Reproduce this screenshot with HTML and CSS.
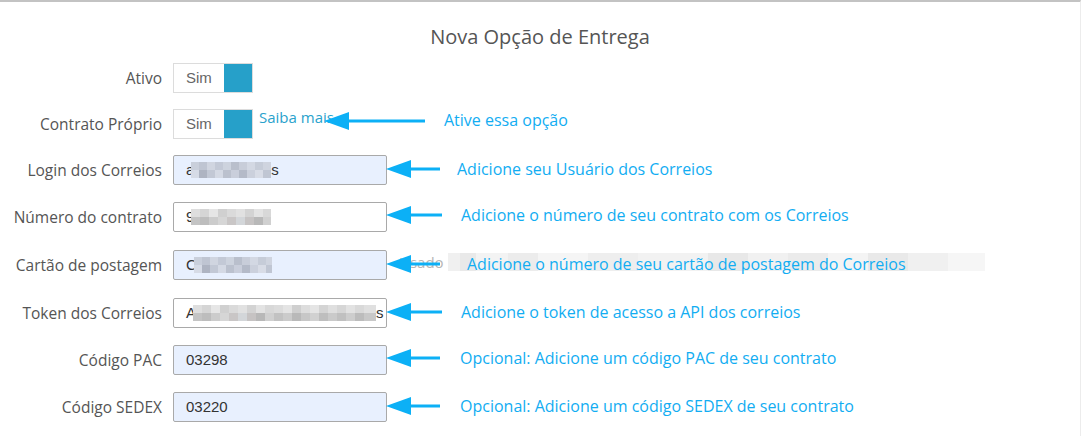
FILE: index.html
```html
<!DOCTYPE html>
<html lang="pt-BR">
<head>
<meta charset="utf-8">
<title>Nova Opção de Entrega</title>
<link rel="stylesheet" href="styles.css">
</head>
<body>
<div class="panel">
  <h2 class="title">Nova Opção de Entrega</h2>
  <form class="form">
    <div class="row">
      <label class="label">Ativo</label>
      <span class="toggle"><span class="toggle-text">Sim</span><span class="toggle-knob"></span></span>
    </div>

    <div class="row">
      <label class="label">Contrato Próprio</label>
      <span class="toggle"><span class="toggle-text">Sim</span><span class="toggle-knob"></span></span>
      <a class="more-link">Saiba mais</a>
      <div class="note note-first">
        <svg class="arrow-long" width="101" height="20" viewBox="0 0 101 20"><polygon points="0,10 25,1 25,19" fill="#0cb0f6"/><rect x="20" y="8.5" width="81" height="3" fill="#0cb0f6"/></svg>
        <span class="note-text">Ative essa opção</span>
      </div>
    </div>

    <div class="row">
      <label class="label">Login dos Correios</label>
      <div class="input input-fill"><span class="ch">a</span><span class="blur blur-blue blur-login"></span><span class="ch">s</span></div>
      <div class="note">
        <svg class="arrow" width="54" height="20" viewBox="0 0 54 20"><polygon points="0,10 25,1 25,19" fill="#0cb0f6"/><rect x="20" y="8.5" width="34" height="3" fill="#0cb0f6"/></svg>
        <span class="note-text">Adicione seu Usuário dos Correios</span>
      </div>
    </div>

    <div class="row row-gap1">
      <label class="label">Número do contrato</label>
      <div class="input"><span class="ch">9</span><span class="blur blur-gray blur-num"></span></div>
      <div class="note note-up">
        <svg class="arrow" width="56" height="20" viewBox="0 0 56 20"><polygon points="0,10 25,1 25,19" fill="#0cb0f6"/><rect x="20" y="8.5" width="36" height="3" fill="#0cb0f6"/></svg>
        <span class="note-text note-shift">Adicione o número de seu contrato com os Correios</span>
      </div>
    </div>

    <div class="row row-gap2">
      <label class="label">Cartão de postagem</label>
      <div class="input input-fill"><span class="ch">C</span><span class="blur blur-blue blur-card"></span></div>
      <span class="help">Usado</span><span class="help-blur"></span>
      <div class="note">
        <svg class="arrow" width="54" height="20" viewBox="0 0 54 20"><polygon points="0,10 25,1 25,19" fill="#0cb0f6"/><rect x="20" y="8.5" width="34" height="3" fill="#0cb0f6"/></svg>
        <span class="note-text note-shift-more">Adicione o número de seu cartão de postagem do Correios</span>
      </div>
    </div>

    <div class="row row-gap2">
      <label class="label">Token dos Correios</label>
      <div class="input"><span class="ch">A</span><span class="blur blur-gray blur-token"></span><span class="ch">s</span></div>
      <div class="note">
        <svg class="arrow" width="56" height="20" viewBox="0 0 56 20"><polygon points="0,10 25,1 25,19" fill="#0cb0f6"/><rect x="20" y="8.5" width="36" height="3" fill="#0cb0f6"/></svg>
        <span class="note-text note-shift">Adicione o token de acesso a API dos correios</span>
      </div>
    </div>

    <div class="row row-gap1">
      <label class="label">Código PAC</label>
      <div class="input input-fill"><span class="ch">03298</span></div>
      <div class="note note-up">
        <svg class="arrow" width="54" height="20" viewBox="0 0 54 20"><polygon points="0,10 25,1 25,19" fill="#0cb0f6"/><rect x="20" y="8.5" width="34" height="3" fill="#0cb0f6"/></svg>
        <span class="note-text note-shift-less">Opcional: Adicione um código PAC de seu contrato</span>
      </div>
    </div>

    <div class="row row-gap1">
      <label class="label">Código SEDEX</label>
      <div class="input input-fill"><span class="ch">03220</span></div>
      <div class="note">
        <svg class="arrow" width="54" height="20" viewBox="0 0 54 20"><polygon points="0,10 25,1 25,19" fill="#0cb0f6"/><rect x="20" y="8.5" width="34" height="3" fill="#0cb0f6"/></svg>
        <span class="note-text note-shift-less">Opcional: Adicione um código SEDEX de seu contrato</span>
      </div>
    </div>
  </form>
</div>
</body>
</html>
```

FILE: styles.css
```css
* { box-sizing: border-box; }

html, body {
  margin: 0;
  background: #ffffff;
}

body {
  font-family: "Open Sans", "Liberation Sans", sans-serif;
  color: #555555;
}

.panel {
  width: 1081px;
  height: 436px;
  border-top: 2px solid #c3c3c3;
  border-right: 1px solid #ececec;
  padding-top: 23px;
}

.title {
  margin: 0 0 14px;
  text-align: center;
  font-size: 20px;
  font-weight: 400;
  line-height: 24px;
  color: #555555;
}

.form {
  display: flex;
  flex-direction: column;
  gap: 16px;
}

.row {
  position: relative;
  display: flex;
  align-items: center;
  height: 30px;
}

.row-gap1 { margin-top: 1px; }
.row-gap2 { margin-top: 2px; }

.label {
  width: 162px;
  margin-right: 11px;
  text-align: right;
  font-size: 15.5px;
  color: #555555;
  white-space: nowrap;
}

.toggle {
  display: flex;
  width: 80px;
  height: 30px;
  border: 1px solid #dcdcdc;
  background: #ffffff;
}

.toggle-text {
  width: 50px;
  font-family: "Liberation Sans", Arial, sans-serif;
  font-size: 15px;
  line-height: 28px;
  color: #666666;
  padding-left: 12px;
}

.toggle-knob {
  flex: 1;
  background: #26a0c9;
}

.more-link {
  align-self: flex-start;
  margin-left: 6px;
  margin-top: -2px;
  font-size: 15px;
  line-height: 20px;
  color: #2aa2cc;
}

.input {
  display: flex;
  align-items: center;
  width: 214px;
  height: 30px;
  border: 1px solid #a9a9a9;
  border-radius: 2px;
  background: #ffffff;
  padding-left: 12px;
  font-family: "Liberation Sans", Arial, sans-serif;
  font-size: 15px;
  color: #333333;
}

.input-fill {
  background: #e8f0fe;
}

.ch { line-height: 16px; }

.blur {
  display: inline-block;
  height: 16px;
  margin-left: -3px;
  background-repeat: no-repeat;
  background-size: 100% 50%;
  background-position: 0 0, 0 100%;
}

.blur-blue {
  background-image:
    linear-gradient(90deg, #c9cfdb 0 8px, #bfc5d2 8px 16px, #d0d5e0 16px 24px, #c3c9d6 24px 32px, #cdd3de 32px 40px, #b9bfcc 40px 48px, #c8cdd9 48px 56px, #d3d8e3 56px 64px, #c6ccd8 64px 72px, #cfd4df 72px 80px),
    linear-gradient(90deg, #d6dbe6 0 8px, #aeb4c2 8px 16px, #c2c8d5 16px 24px, #d4d9e4 24px 32px, #bbc1ce 32px 40px, #c9cedb 40px 48px, #b4bac8 48px 56px, #cbd0dc 56px 64px, #d8dce6 64px 72px, #c0c6d3 72px 80px);
}

.blur-gray {
  background-image:
    linear-gradient(90deg, #dedede 0 9px, #d5d5d5 9px 18px, #e6e6e6 18px 27px, #d0d0d0 27px 36px, #dadada 36px 45px, #e1e1e1 45px 54px, #d3d3d3 54px 63px, #e3e3e3 63px 72px, #d8d8d8 72px 81px, #dcdcdc 81px 90px, #e4e4e4 90px 99px, #cfcfcf 99px 108px, #dddddd 108px 117px, #e5e5e5 117px 126px, #d4d4d4 126px 135px, #dfdfdf 135px 144px, #d6d6d6 144px 153px, #e2e2e2 153px 162px, #d9d9d9 162px 171px, #e0e0e0 171px 183px),
    linear-gradient(90deg, #c4c4c4 0 9px, #bdbdbd 9px 18px, #cccccc 18px 27px, #d6d6d6 27px 36px, #c9c6c6 36px 45px, #d3d6d9 45px 54px, #c6c3c3 54px 63px, #b8b8b8 63px 72px, #d0d0d0 72px 81px, #c2c2c2 81px 90px, #cbcbcb 90px 99px, #b9b9b9 99px 108px, #c7c7c7 108px 117px, #d1d1d1 117px 126px, #bebebe 126px 135px, #cacaca 135px 144px, #c0c0c0 144px 153px, #cdcdcd 153px 162px, #bcbcbc 162px 171px, #c8c8c8 171px 183px);
}

.blur-login { width: 80px; }
.blur-num { width: 80px; }
.blur-card { width: 78px; }
.blur-token { width: 183px; }

.help {
  margin-left: 12px;
  font-size: 15px;
  color: #b5b5b5;
  margin-top: -6px;
}

.help-blur {
  width: 537px;
  height: 18px;
  margin-left: 4px;
  margin-top: -6px;
  background: linear-gradient(90deg, #f0f0f0 0 12px, #e9e9e9 12px 28px, #f3f3f3 28px 60px, #ececec 60px 90px, #f5f5f5 90px 140px, #eeeeee 140px 190px, #f2f2f2 190px 260px, #e8e8e8 260px 300px, #f1f1f1 300px 340px, #ebebeb 340px 380px, #f4f4f4 380px 420px, #e9e9e9 420px 460px, #f0f0f0 460px 500px, #f6f6f6 500px 537px);
}

.note {
  position: absolute;
  left: 386px;
  top: -1px;
  height: 100%;
  display: flex;
  align-items: center;
  color: #12adf2;
}

.note-first {
  left: 324px;
  top: -3px;
}

.note-up { top: -2px; }

.arrow, .arrow-long {
  flex: none;
  display: block;
}

.note-text {
  margin-left: 17px;
  font-family: "Open Sans", sans-serif;
  font-size: 16px;
  white-space: nowrap;
  color: #12adf2;
}

.note-first .note-text { margin-left: 19px; margin-top: -3px; }
.note-shift { margin-left: 19px; }
.note-shift-more { margin-left: 27px; }
.note-shift-less { margin-left: 20px; }
```
